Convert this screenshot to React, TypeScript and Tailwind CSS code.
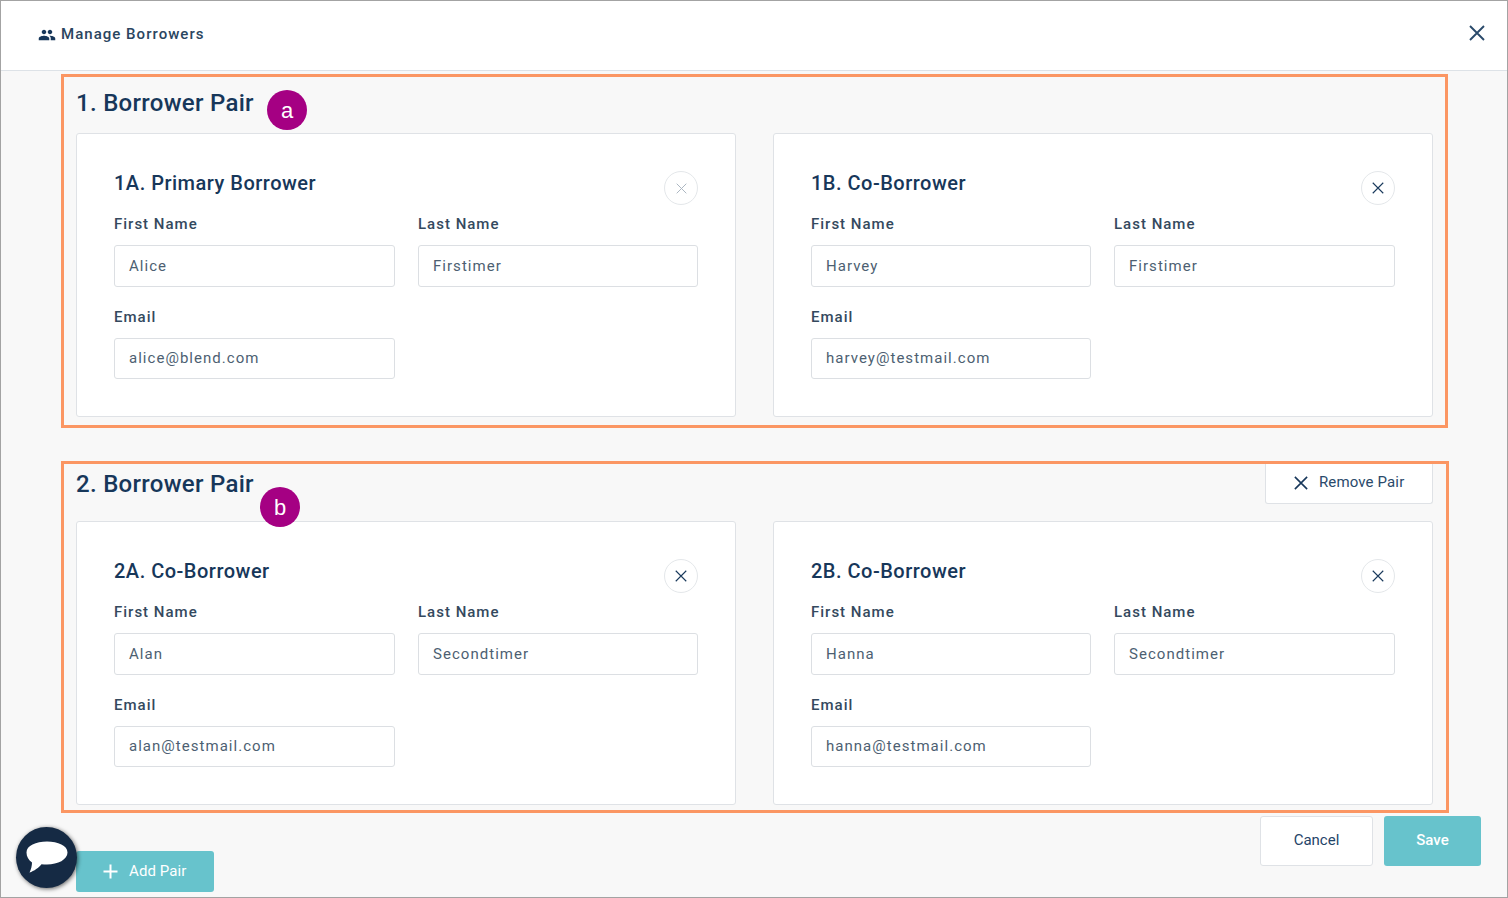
import { MdPeople } from "react-icons/md";

interface Person {
  title: string;
  first: string;
  last: string;
  email: string;
  faded?: boolean;
}

function Cross({ size, stroke = "#1a3a5c", width = 1.5 }: { size: number; stroke?: string; width?: number }) {
  return (
    <svg width={size} height={size} viewBox="0 0 16 16" fill="none" stroke={stroke} strokeWidth={width}>
      <path d="M1 1L15 15M15 1L1 15" />
    </svg>
  );
}

function Field({ label, value, className, short }: { label: string; value: string; className: string; short?: boolean }) {
  return (
    <div className={className}>
      <div className="h-[22px] text-[15px] leading-[22px] font-medium tracking-[1px] text-[#34495e]">{label}</div>
      <div
        className={`mt-[10px] flex items-center rounded-[3px] border border-[#dcdfe3] bg-white px-[14px] text-[15px] tracking-[1.03px] text-[#4d5f72] ${
          short ? "h-[41px]" : "h-[42px]"
        }`}
      >
        {value}
      </div>
    </div>
  );
}

function BorrowerCard({ person, narrow }: { person: Person; narrow?: boolean }) {
  return (
    <div className="h-[284px] w-[660px] rounded-[3px] border border-[#dfe2e6] bg-white pt-[36px] pl-[37px] pr-[37px]">
      <div className="flex h-[34px] items-start justify-between">
        <div className="text-[20px] leading-[26px] font-medium tracking-[0.5px] text-[#17375a]">{person.title}</div>
        <button className="mt-[1px] flex h-[34px] w-[34px] items-center justify-center rounded-full border border-[#e4e7ea] bg-white">
          {person.faded ? <Cross size={11} stroke="#a9b4bf" width={1.4} /> : <Cross size={12} width={1.5} />}
        </button>
      </div>
      <div className="mt-[9px] flex gap-[23px]">
        <Field label={"First Name"} value={person.first} className={narrow ? "w-[280px]" : "w-[281px]"} />
        <Field label={"Last Name"} value={person.last} className={narrow ? "w-[281px]" : "w-[280px]"} />
      </div>
      <Field label={"Email"} value={person.email} short className={`mt-[19px] ${narrow ? "w-[280px]" : "w-[281px]"}`} />
    </div>
  );
}

function Badge({ letter, className }: { letter: string; className: string }) {
  return (
    <div className={`absolute flex h-[40px] w-[40px] items-center justify-center rounded-full bg-[#a50083] text-[22px] text-white font-['Liberation_Sans',sans-serif] ${className}`}>
      {letter}
    </div>
  );
}

const firstPair: Person[] = [
  { title: "1A. Primary Borrower", first: "Alice", last: "Firstimer", email: "alice@blend.com", faded: true },
  { title: "1B. Co-Borrower", first: "Harvey", last: "Firstimer", email: "harvey@testmail.com" },
];

const secondPair: Person[] = [
  { title: "2A. Co-Borrower", first: "Alan", last: "Secondtimer", email: "alan@testmail.com" },
  { title: "2B. Co-Borrower", first: "Hanna", last: "Secondtimer", email: "hanna@testmail.com" },
];

export default function App() {
  return (
    <div className="relative h-[898px] w-[1508px] overflow-hidden border border-[#a3a3a3] bg-[#f8f8f8] font-['Roboto',sans-serif]">
      {/* header */}
      <div className="flex h-[70px] items-center justify-between border-b border-[#dde2e7] bg-white pb-[2px] pl-[37px] pr-[22px]">
        <div className="flex items-center gap-[5px] text-[15px] font-medium tracking-[1.03px] text-[#2a4560]">
          <MdPeople size={18} className="text-[#17375a]" />
          Manage Borrowers
        </div>
        <div className="mb-[3px]">
          <Cross size={16} stroke="#2a4a6b" width={1.9} />
        </div>
      </div>

      {/* pair 1 */}
      <section className="relative mt-[3px] ml-[60px] h-[354px] w-[1387px] border-[3px] border-[#fb9663] px-[12px]">
        <div className="h-[56px] pt-[11px] text-[24px] leading-[30px] font-medium tracking-[0.29px] text-[#17375a]">
          1. Borrower Pair
        </div>
        <div className="flex gap-[37px]">
          {firstPair.map((p, i) => (
            <BorrowerCard key={p.title} person={p} narrow={i === 1} />
          ))}
        </div>
        <Badge letter="a" className="left-[203px] top-[13px]" />
      </section>

      {/* pair 2 */}
      <section className="relative mt-[33px] ml-[60px] h-[352px] w-[1388px] border-[3px] border-[#fb9663] px-[12px]">
        <div className="flex h-[57px] items-start justify-between">
          <div className="pt-[5px] text-[24px] leading-[30px] font-medium tracking-[0.29px] text-[#17375a]">
            2. Borrower Pair
          </div>
          <button className="mr-[1px] flex h-[40px] w-[168px] items-center gap-[11px] rounded-b-[3px] border border-t-0 border-[#dfe2e6] bg-white pb-[2px] pl-[28px] text-[15px] tracking-[0.13px] text-[#2a4a6b]">
            <Cross size={14} stroke="#17375a" width={1.8} />
            Remove Pair
          </button>
        </div>
        <div className="flex gap-[37px]">
          {secondPair.map((p, i) => (
            <BorrowerCard key={p.title} person={p} narrow={i === 1} />
          ))}
        </div>
        <Badge letter="b" className="left-[196px] top-[23px]" />
      </section>

      {/* footer */}
      <div className="flex h-[81px] items-start justify-between pl-[75px] pr-[26px]">
        <button className="mt-[38px] flex h-[41px] w-[138px] items-center gap-[11px] rounded-[3px] bg-[#67c3cc] pb-[1px] pl-[27px] text-[15px] tracking-[0.1px] text-white">
          <svg width="15" height="15" viewBox="0 0 15 15" fill="none" stroke="white" strokeWidth="2">
            <path d="M7.5 0.5V14.5M0.5 7.5H14.5" />
          </svg>
          Add Pair
        </button>
        <div className="mt-[3px] flex gap-[11px]">
          <button className="h-[50px] w-[113px] rounded-[3px] border border-[#dfe2e6] bg-white pb-[2px] text-[15px] text-[#1f4468]">Cancel</button>
          <button className="h-[50px] w-[97px] rounded-[3px] bg-[#67c3cc] pb-[2px] text-[15px] font-medium text-white">Save</button>
        </div>
      </div>

      {/* chat launcher */}
      <div className="absolute left-[15px] top-[826px] flex h-[61px] w-[61px] items-center justify-center rounded-full bg-[#152a44] shadow-[1px_1px_4px_rgba(0,0,0,0.6)]">
        <svg width="42" height="32" viewBox="0 0 42 32" fill="white" className="mb-[2px]">
          <path d="M21 0.5C32 0.5 41.5 4.5 41.5 11.5C41.5 18.5 32 23.5 21 23.5C19 23.5 17 23.4 15.5 23.2C13 26.5 8 30 3.5 31.5C5 28.5 6 25 6 21.5C2.5 19 0.5 15.5 0.5 11.5C0.5 4.5 10 0.5 21 0.5Z" />
        </svg>
      </div>
    </div>
  );
}
